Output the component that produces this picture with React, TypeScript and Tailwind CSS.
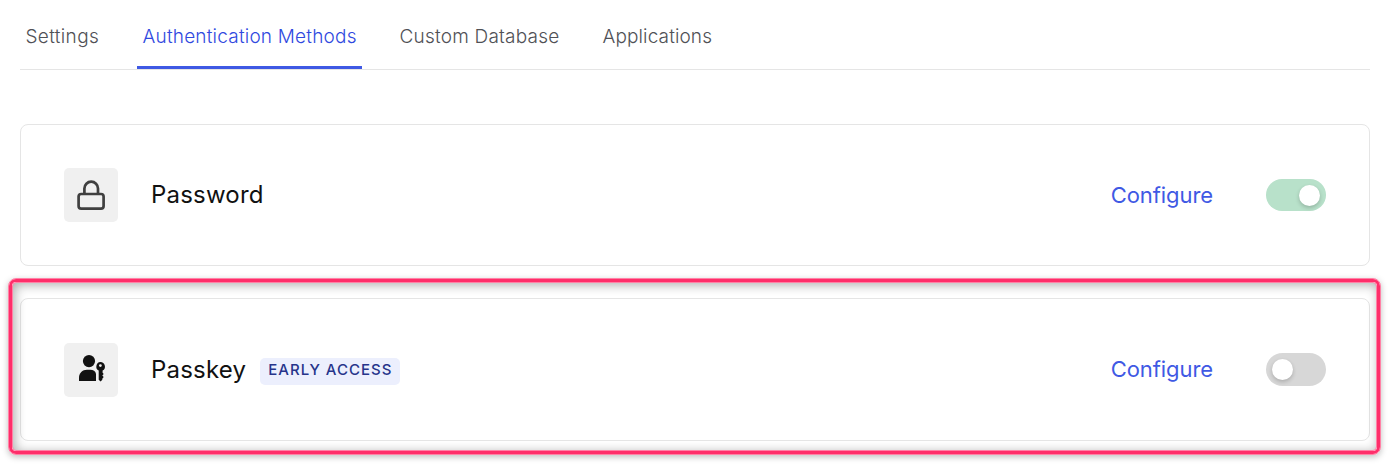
import React from "react";

const tabs = [
  { label: "Settings", className: "w-[84px] text-[#505156] tracking-[0.35px]", active: false },
  { label: "Authentication Methods", className: "w-[225px] text-[#3049e0] tracking-[0.2px]", active: true },
  { label: "Custom Database", className: "-ml-px w-[170px] text-[#505156] tracking-[0.22px]", active: false },
  { label: "Applications", className: "w-[120px] text-[#505156] tracking-[0.12px]", active: false },
];

function LockIcon() {
  return (
    <svg width="54" height="54" viewBox="0 0 54 54" fill="none" stroke="#3f3f3f" strokeWidth="2.7" strokeLinejoin="round">
      <rect x="14.6" y="26" width="25" height="14.6" rx="2.6" />
      <path d="M20.4 26v-5.5a6.8 6.8 0 0 1 13.6 0V26" />
    </svg>
  );
}

function PasskeyIcon() {
  return (
    <svg width="54" height="54" viewBox="0 0 54 54" fill="#111">
      <circle cx="25" cy="18.1" r="6.1" />
      <path d="M15 38v-3.2c0-4.6 3.4-8 8-8h3.2c3 0 5.3 1.6 5.8 4V38Z" />
      <path fillRule="evenodd" d="M36.4 19a4.6 4.6 0 0 1 2.2 8.6v2.2l1.1 1.2-1.4 1.6 1.4 1.5-1.4 1.6v1.1l-1.7 1.6-1.9-1.6v-9.2A4.6 4.6 0 0 1 36.4 19Zm0 2.2a1.4 1.4 0 1 0 0 2.8 1.4 1.4 0 0 0 0-2.8Z" />
    </svg>
  );
}

function Toggle({ on }: { on: boolean }) {
  return (
    <div
      role="switch"
      aria-checked={on}
      className={
        on
          ? "flex h-8 w-[60px] items-center justify-end rounded-full bg-[#b8e1ca] pr-[6px]"
          : "flex h-[33px] w-[60px] items-center justify-start rounded-full bg-[#d7d7d7] pl-[6px]"
      }
    >
      <span className="size-[21px] rounded-full bg-white shadow-[0_2px_4px_rgba(0,0,0,0.2)]" />
    </div>
  );
}

export default function App() {
  return (
    <div className="relative h-[472px] w-[1393px] overflow-hidden bg-white px-5 font-['Inter',sans-serif]">
      <nav className="flex h-[70px] w-[1350px] gap-[33px] border-b border-[#e5e5e5]">
        {tabs.map((t) => (
          <a
            key={t.label}
            className={`flex h-[69px] justify-start pl-[5.5px] pt-[23px] text-[19px] leading-7 font-light whitespace-nowrap ${t.className} ${t.active ? "border-b-[3px] border-[#3f59e4]" : ""}`}
          >
            {t.label}
          </a>
        ))}
      </nav>

      <section className="mt-[54px] flex h-[142px] w-[1350px] items-center rounded-lg border border-[#e5e5e5] px-[43px]">
        <div className="size-[54px] rounded-[5px] bg-[#f0f0f0]">
          <LockIcon />
        </div>
        <h2 className="ml-[33px] text-[24px] leading-8 tracking-[0.2px] text-[#111]">Password</h2>
        <a className="ml-auto mr-[53px] text-[22px] leading-8 tracking-[-0.08px] text-[#3f59e4]">Configure</a>
        <Toggle on />
      </section>

      <section className="mt-8 flex h-[143px] w-[1350px] items-center rounded-lg border border-[#e5e5e5] px-[43px]">
        <div className="size-[54px] rounded-[5px] bg-[#f0f0f0]">
          <PasskeyIcon />
        </div>
        <h2 className="ml-[33px] text-[24px] leading-8 tracking-[0.2px] text-[#111]">Passkey</h2>
        <span className="mt-[3px] ml-[14px] h-[27px] w-[140px] rounded-[5px] bg-[#eceffd] pl-2 text-[15px] leading-[24px] font-medium tracking-[1.02px] whitespace-nowrap text-[#26348b]">
          EARLY ACCESS
        </span>
        <a className="mb-px ml-auto mr-[53px] text-[22px] leading-8 tracking-[-0.08px] text-[#3f59e4]">Configure</a>
        <Toggle on={false} />
      </section>

      <div className="pointer-events-none absolute top-[278px] left-[8px] h-[177px] w-[1373px] rounded-[8px] border border-[#ff2e6a]/60 shadow-[0_2px_6px_rgba(0,0,0,0.25)]">
        <div className="h-full w-full rounded-[7px] border-[3px] border-[#ff2e6a]">
          <div className="h-full w-full rounded-[4px] border border-[#ff2e6a]/60 shadow-[inset_2px_2px_11px_rgba(0,0,0,0.32)]" />
        </div>
      </div>
    </div>
  );
}
